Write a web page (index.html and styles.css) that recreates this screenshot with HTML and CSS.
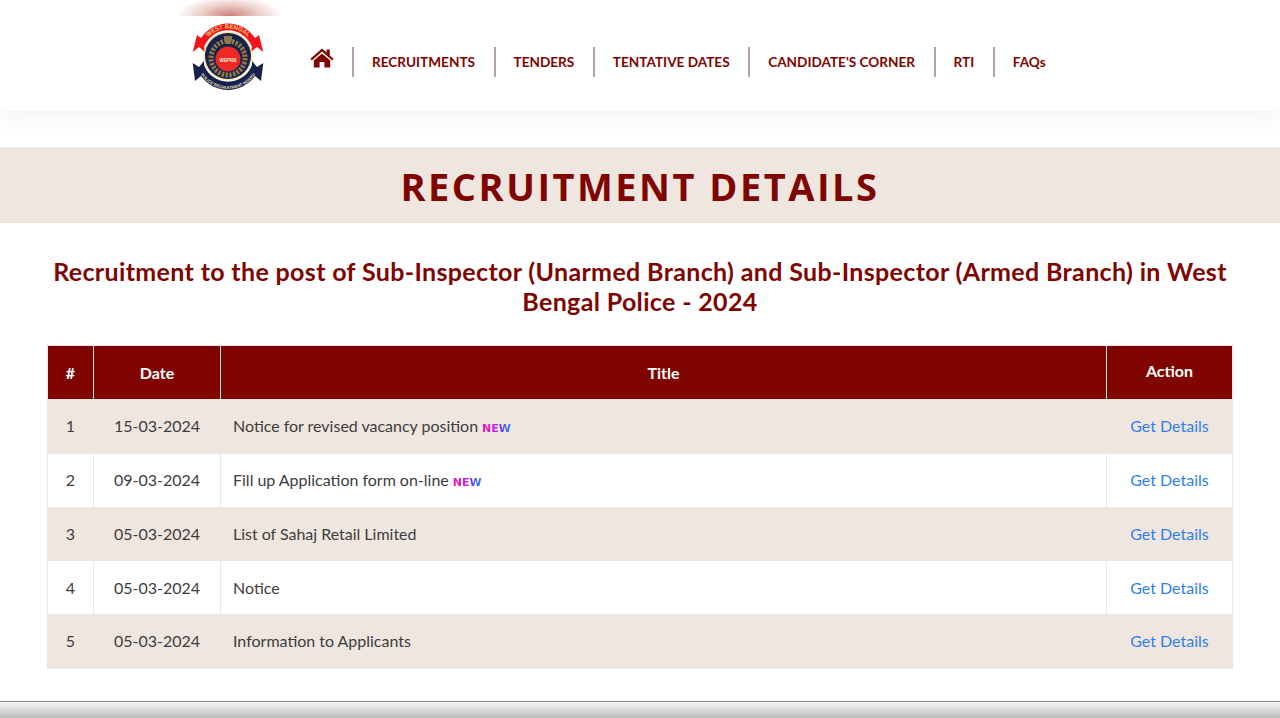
FILE: index.html
```html
<!DOCTYPE html>
<html lang="en">
<head>
<meta charset="utf-8">
<title>Recruitment Details</title>
<link rel="stylesheet" href="styles.css">
</head>
<body>
<header class="site-header">
  <div class="logo-glow"></div>
  <a class="logo" href="#" aria-label="West Bengal Police Recruitment Board">
    <svg width="74" height="72" viewBox="0 0 74 72">
      <defs>
        <path id="arcTop" d="M9.5 34 A27.5 27.5 0 0 1 64.5 34"/>
        <path id="arcBottom" d="M4 34 A33 33 0 0 0 70 34"/>
      </defs>
      <path d="M6 13 L1.7 30 L8 25 L15 31 L13 25 A25.6 25.6 0 0 1 61 25 L59 31 L66 25 L72.3 30 L68 13 L64 16 A32.4 32.4 0 0 0 10 16 Z" fill="#f0161c"/>
      <path d="M1.7 41 L8 45 L13 39 L13 43 A25.6 25.6 0 0 0 61 43 L61 39 L66 45 L72.3 41 L70 59 L64 54 A33 33 0 0 1 10 54 L4 59 Z" fill="#15224e"/>
      <circle cx="37" cy="34" r="24.5" fill="#f6e3a6"/>
      <circle cx="37" cy="34" r="23" fill="#15224e"/>
      <circle cx="37" cy="36" r="17" fill="none" stroke="#8f7a45" stroke-width="5" stroke-dasharray="2.400 1.400"/>
      <circle cx="37" cy="37" r="12.500" fill="#ee2a24"/>
      <path d="M33 14 h8 v4 l-1.500 4 h-5 l-1.500-4 Z" fill="#8b7a4d"/>
      <text class="logo-mark" x="37" y="39.500" text-anchor="middle">WBPRB</text>
      <text class="logo-top"><textPath href="#arcTop" startOffset="50%" text-anchor="middle">WEST BENGAL</textPath></text>
      <text class="logo-bottom"><textPath href="#arcBottom" startOffset="50%" text-anchor="middle">POLICE RECRUITMENT BOARD</textPath></text>
    </svg>
  </a>
  <nav class="main-nav">
    <a class="nav-home" href="#" aria-label="Home">
      <svg width="24" height="20" viewBox="0 0 24 20">
        <path d="M12 .6 L16.600 4.600 V1.600 H19.800 V7.400 L23.600 10.700 L22.100 12.400 L12 3.600 L1.900 12.400 L.4 10.700 Z" fill="#800500"/>
        <path d="M12 5.400 L20.200 12.500 V19.600 H14.400 V14 H9.600 V19.600 H3.800 V12.500 Z" fill="#800500"/>
      </svg>
    </a>
    <a class="nav-link" href="#">RECRUITMENTS</a>
    <a class="nav-link" href="#">TENDERS</a>
    <a class="nav-link" href="#">TENTATIVE DATES</a>
    <a class="nav-link" href="#">CANDIDATE'S CORNER</a>
    <a class="nav-link" href="#">RTI</a>
    <a class="nav-link" href="#">FAQs</a>
  </nav>
</header>

<section class="banner"><h1>RECRUITMENT DETAILS</h1></section>

<main class="content">
  <h2>Recruitment to the post of Sub-Inspector (Unarmed Branch) and Sub-Inspector (Armed Branch) in West Bengal Police - 2024</h2>
  <table class="details">
    <colgroup>
      <col class="col-num"><col class="col-date"><col class="col-title"><col class="col-action">
    </colgroup>
    <thead>
      <tr><th>#</th><th>Date</th><th>Title</th><th class="th-action">Action</th></tr>
    </thead>
    <tbody>
      <tr><td>1</td><td>15-03-2024</td><td class="title">Notice for revised vacancy position <span class="new">NEW</span></td><td><a href="#">Get Details</a></td></tr>
      <tr><td>2</td><td>09-03-2024</td><td class="title">Fill up Application form on-line <span class="new">NEW</span></td><td><a href="#">Get Details</a></td></tr>
      <tr><td>3</td><td>05-03-2024</td><td class="title">List of Sahaj Retail Limited</td><td><a href="#">Get Details</a></td></tr>
      <tr><td>4</td><td>05-03-2024</td><td class="title">Notice</td><td><a href="#">Get Details</a></td></tr>
      <tr><td>5</td><td>05-03-2024</td><td class="title">Information to Applicants</td><td><a href="#">Get Details</a></td></tr>
    </tbody>
  </table>
</main>
<footer class="site-footer"></footer>
</body>
</html>
```
FILE: styles.css
```css
* { box-sizing: border-box; }
html, body { margin: 0; height: 718px; overflow: hidden; }
body { background: #fff; font-family: "Lato", "Liberation Sans", sans-serif; color: #3d3d3d; }
a { text-decoration: none; }

.site-header { position: relative; height: 111px; padding-left: 191px; display: flex; align-items: flex-start; background: #fff; box-shadow: 0 8px 24px rgba(0,0,0,.05); }
.logo-glow { position: absolute; left: 178px; top: 0; width: 104px; height: 16px; background: radial-gradient(ellipse 52px 20px at 50% 100%, #c97f76 0, rgba(222,170,162,.6) 55%, rgba(255,255,255,0) 100%); }
.logo { display: block; width: 74px; margin-top: 22px; }
.logo-top { font: 700 6px "Liberation Sans", sans-serif; fill: #f8cf72; }
.logo-bottom { font: 700 4.2px "Liberation Sans", sans-serif; fill: #e9dcae; }
.logo-mark { font: 700 4.5px "Liberation Sans", sans-serif; fill: #ffe7dc; }

.main-nav { display: flex; align-items: flex-start; margin-left: 45px; margin-top: 47px; }
.nav-home { display: block; width: 42px; padding-top: 1px; }
.nav-link { display: block; height: 30px; line-height: 30px; padding: 0 18.5px 0 18px; border-left: 2px solid #b5a3a3; color: #800500; font-size: 13.6px; font-weight: 700; white-space: nowrap; }

.banner { margin-top: 36px; height: 76px; padding-top: 1px; background: #efe6e0; display: flex; align-items: center; justify-content: center; }
.banner h1 { margin: 0; font: 700 38px/1 "Open Sans", sans-serif; letter-spacing: 2.5px; color: #800500; }

.content { padding: 33px 47px 0; }
.content h2 { margin: 0 0 29px; text-align: center; font-size: 25px; letter-spacing: .35px; line-height: 30px; font-weight: 700; color: #800500; }

.details { width: 1185px; border-collapse: collapse; table-layout: fixed; font-size: 16px; }
.col-num { width: 46px; } .col-date { width: 127px; } .col-title { width: 886px; } .col-action { width: 126px; }
.details th { height: 54px; background: #800500; color: #fff; font-size: 16px; font-weight: 700; border: 1px solid #e3e3e3; text-align: center; vertical-align: middle; padding: 0 0 1px; }
.details .th-action { padding-bottom: 5px; }
.details td { height: 53.75px; border: 1px solid #e6e8ea; text-align: center; padding: 0 0 1px; vertical-align: middle; }
.details tbody tr:nth-child(odd) { background: #efe6e0; }
.details td.title { text-align: left; padding-left: 12px; word-spacing: -.1px; }
.details a { color: #2d7ff0; }
.new { font: 700 11px "DejaVu Sans", sans-serif; background: linear-gradient(90deg, #ff0f9c 0, #d01ee0 40%, #6a40f0 65%, #1e8cf0 100%); -webkit-background-clip: text; background-clip: text; color: transparent; }

.site-footer { position: absolute; left: 0; right: 0; top: 701px; height: 17px; border-top: 1px solid #8c8c8c; background: linear-gradient(#f6f6f6, #bdbdbd); }
```
